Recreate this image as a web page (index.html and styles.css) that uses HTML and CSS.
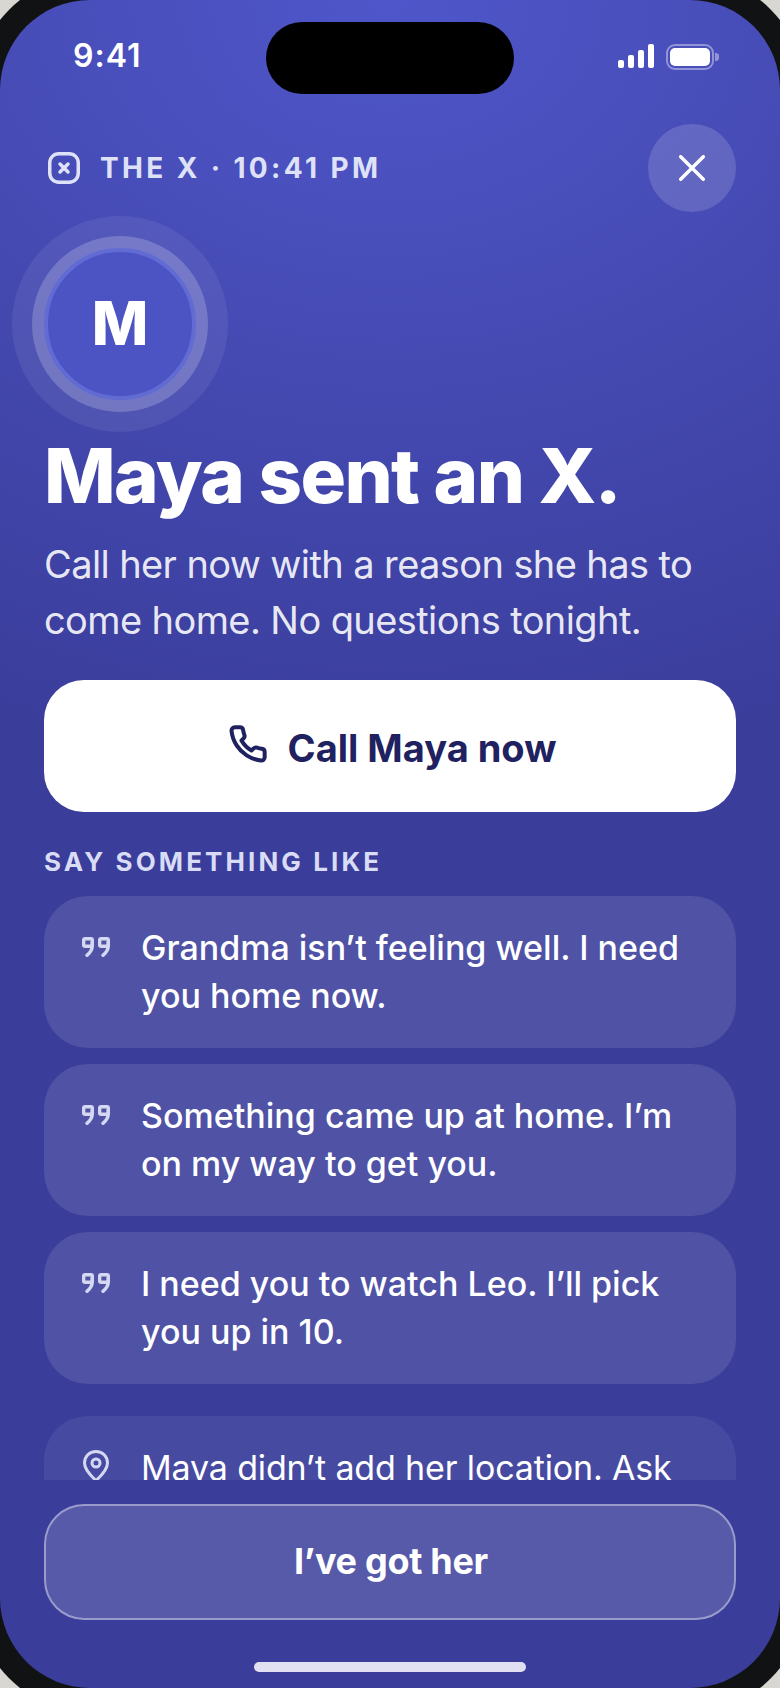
FILE: index.html
```html
<!DOCTYPE html>
<html lang="en">
<head>
    <meta charset="UTF-8" />
    <meta name="viewport" content="width=device-width, initial-scale=1.0" />
    <title>Maya sent an X</title>
    <link rel="stylesheet" href="styles.css">
</head>
<body>

<div class="bezel">
<div class="screen">

    <div class="status">
        <span class="time">9:41</span>
        <div class="island"></div>
        <div class="status-right">
            <div class="signal"><i class="b1"></i><i class="b2"></i><i class="b3"></i><i class="b4"></i></div>
            <div class="battery"><i></i></div>
            <div class="nub"></div>
        </div>
    </div>

    <div class="main">
        <div class="top">
            <div class="brand">
                <svg class="brand-icon" viewBox="0 0 32 32" fill="none" stroke="currentColor" stroke-linecap="round">
                    <rect x="1.750" y="1.750" width="28.500" height="28.500" rx="9" stroke-width="3.500"/>
                    <path d="M12 12l8 8M20 12l-8 8" stroke-width="3.500"/>
                </svg>
                <span>THE X · 10:41 PM</span>
            </div>
            <div class="close">
                <svg viewBox="0 0 26 26" fill="none" stroke="#fff" stroke-width="3.400" stroke-linecap="round">
                    <path d="M1.700 1.700l22.600 22.600M24.300 1.700L1.700 24.300"/>
                </svg>
            </div>
        </div>

        <div class="avatar">M</div>

        <h1>Maya sent an X.</h1>
        <p class="sub">Call her now with a reason she has to come home. No questions tonight.</p>

        <div class="call">
            <svg viewBox="0 0 24 24" fill="none" stroke="#1f2160" stroke-width="2.400" stroke-linecap="round" stroke-linejoin="round">
                <path d="M22 16.920v3a2 2 0 0 1-2.180 2 19.790 19.790 0 0 1-8.630-3.070 19.500 19.500 0 0 1-6-6 19.790 19.790 0 0 1-3.070-8.670A2 2 0 0 1 4.110 2h3a2 2 0 0 1 2 1.720 12.840 12.840 0 0 0 .7 2.810 2 2 0 0 1-.45 2.110L8.090 9.910a16 16 0 0 0 6 6l1.270-1.270a2 2 0 0 1 2.110-.45 12.840 12.840 0 0 0 2.810.7A2 2 0 0 1 22 16.920z"/>
            </svg>
            <span>Call Maya now</span>
        </div>

        <div class="label">SAY SOMETHING LIKE</div>

        <div class="cards">
            <div class="card">
                <svg class="quote" viewBox="0 0 28 20" fill="none" stroke="currentColor" stroke-width="3.400" stroke-linecap="round" stroke-linejoin="round">
                    <rect x="1.700" y="1.700" width="8.600" height="7.600" rx="1.500"/><path d="M10.300 5v3.500c0 4-1.800 7-5.300 9.800"/>
                    <rect x="17.700" y="1.700" width="8.600" height="7.600" rx="1.500"/><path d="M26.300 5v3.500c0 4-1.800 7-5.300 9.800"/>
                </svg>
                <p>Grandma isn’t feeling well. I need you home now.</p>
            </div>
            <div class="card">
                <svg class="quote" viewBox="0 0 28 20" fill="none" stroke="currentColor" stroke-width="3.400" stroke-linecap="round" stroke-linejoin="round">
                    <rect x="1.700" y="1.700" width="8.600" height="7.600" rx="1.500"/><path d="M10.300 5v3.500c0 4-1.800 7-5.300 9.800"/>
                    <rect x="17.700" y="1.700" width="8.600" height="7.600" rx="1.500"/><path d="M26.300 5v3.500c0 4-1.800 7-5.300 9.800"/>
                </svg>
                <p>Something came up at home. I’m on my way to get you.</p>
            </div>
            <div class="card">
                <svg class="quote" viewBox="0 0 28 20" fill="none" stroke="currentColor" stroke-width="3.400" stroke-linecap="round" stroke-linejoin="round">
                    <rect x="1.700" y="1.700" width="8.600" height="7.600" rx="1.500"/><path d="M10.300 5v3.500c0 4-1.800 7-5.300 9.800"/>
                    <rect x="17.700" y="1.700" width="8.600" height="7.600" rx="1.500"/><path d="M26.300 5v3.500c0 4-1.800 7-5.300 9.800"/>
                </svg>
                <p>I need you to watch Leo. I’ll pick you up in 10.</p>
            </div>
            <div class="card card-loc">
                <svg class="pin" viewBox="0 0 26 32" fill="none" stroke="currentColor" stroke-width="3">
                    <path d="M13 1.500C6.500 1.500 1.500 6.500 1.500 13c0 7 6.500 13 11.500 17.500C18 26 24.500 20 24.500 13 24.500 6.500 19.500 1.500 13 1.500z"/>
                    <circle cx="13" cy="13" r="4"/>
                </svg>
                <p>Maya didn’t add her location. Ask her where she is.</p>
            </div>
        </div>
    </div>

    <div class="footer">
        <div class="got-her">I’ve got her</div>
        <div class="home"></div>
    </div>

</div>
</div>

</body>
</html>
```
FILE: styles.css
```css
*{ box-sizing:border-box; }
html, body{ margin:0; height:1688px; overflow:hidden; }
body{ background:#d9d7d1; font-family:"Inter", "Liberation Sans", sans-serif; color:#fff; }

.bezel{ margin:-24px; height:1736px; padding:24px; background:#111214; border-radius:114px; }
.screen{
    height:1688px; border-radius:90px; overflow:hidden;
    display:flex; flex-direction:column;
    background:radial-gradient(ellipse 1000px 780px at 50% 0%, #4f56c9 0%, #3a3d9a 100%);
    background-color:#3a3d9a;
}

.status{ height:124px; flex:none; padding:22px 0 0 0; display:flex; justify-content:space-between; align-items:flex-start; position:relative; }
.time{ font-size:32px; font-weight:600; line-height:36px; letter-spacing:1px; margin:16px 0 0 73px; }
.island{ position:absolute; left:266px; top:22px; width:248px; height:72px; border-radius:36px; background:#000; }
.status-right{ display:flex; align-items:flex-start; margin:22px 61px 0 0; }
.signal{ display:flex; align-items:flex-end; gap:4px; height:24px; margin-right:12px; }
.signal i{ display:block; width:6px; background:#fff; border-radius:2px; }
.b1{ height:8px; }
.b2{ height:13px; }
.b3{ height:18px; }
.b4{ height:24px; }
.battery{ width:48px; height:26px; border:2px solid rgba(255,255,255,.4); border-radius:9px; padding:2px; }
.battery i{ display:block; height:18px; background:#fff; border-radius:5px; }
.nub{ width:4px; height:8px; margin:9px 0 0 1px; background:rgba(255,255,255,.4); border-radius:0 3px 3px 0; }

.main{ flex:1; min-height:0; overflow:hidden; padding:0 44px; }
.top{ display:flex; justify-content:space-between; align-items:center; height:88px; }
.brand{ display:flex; align-items:center; gap:20px; padding-left:4px; font-size:28px; font-weight:700; letter-spacing:3.36px; color:#dfe1f7; }
.brand-icon{ width:32px; height:32px; }
.close{ width:88px; height:88px; border-radius:50%; background:rgba(255,255,255,.15); display:flex; align-items:center; justify-content:center; }
.close svg{ width:26px; height:26px; }

.avatar{
    width:152px; height:152px; margin-top:36px; padding-bottom:2px; border-radius:50%;
    background:#4c54c4; border:4px solid #626bd3;
    box-shadow:0 0 0 12px rgba(255,255,255,.2), 0 0 0 32px rgba(255,255,255,.07);
    display:flex; align-items:center; justify-content:center;
    font-size:60px; font-weight:800;
}

h1{ margin:29px 0 0 0; font-size:76px; line-height:92px; font-weight:800; letter-spacing:-1.6px; }
.sub{ margin:15px 0 0 0; font-size:38px; line-height:56px; font-weight:400; letter-spacing:-.6px; color:rgba(255,255,255,.9); }

.call{ margin-top:32px; height:132px; padding:0 0 0 4px; border-radius:40px; background:#fff; color:#1f2160; display:flex; align-items:center; justify-content:center; gap:20px; font-size:38px; font-weight:700; }
.call span{ padding-top:4px; }
.call svg{ width:40px; height:40px; margin-top:-4px; }

.label{ margin-top:35px; font-size:26px; line-height:30px; font-weight:700; letter-spacing:3.1px; color:#d9dcf5; }

.cards{ margin-top:19px; display:flex; flex-direction:column; gap:16px; }
.card{ display:flex; align-items:flex-start; gap:31px; min-height:152px; padding:28px 36px 28px 38px; border-radius:44px; background:rgba(255,255,255,.11); }
.card p{ margin:0; font-size:34px; line-height:48px; font-weight:500; }
.quote{ flex:none; width:28px; height:20px; margin-top:13px; color:#d5d8f3; }
.card-loc{ margin-top:16px; background:rgba(255,255,255,.07); }
.card-loc p{ font-weight:400; letter-spacing:-.15px; }
.pin{ flex:none; width:26px; height:32px; margin:6px 1px 0 1px; color:#d5d8f3; }

.footer{ flex:none; height:208px; padding:24px 44px 0 44px; display:flex; flex-direction:column; align-items:center; }
.got-her{ width:100%; height:116px; padding:0 0 3px 2px; border:2px solid rgba(255,255,255,.4); border-radius:40px; background:rgba(255,255,255,.15); display:flex; align-items:center; justify-content:center; font-size:36px; font-weight:700; letter-spacing:-.3px; }
.home{ width:272px; height:10px; margin-top:42px; border-radius:5px; background:#e0e0f2; }
```
